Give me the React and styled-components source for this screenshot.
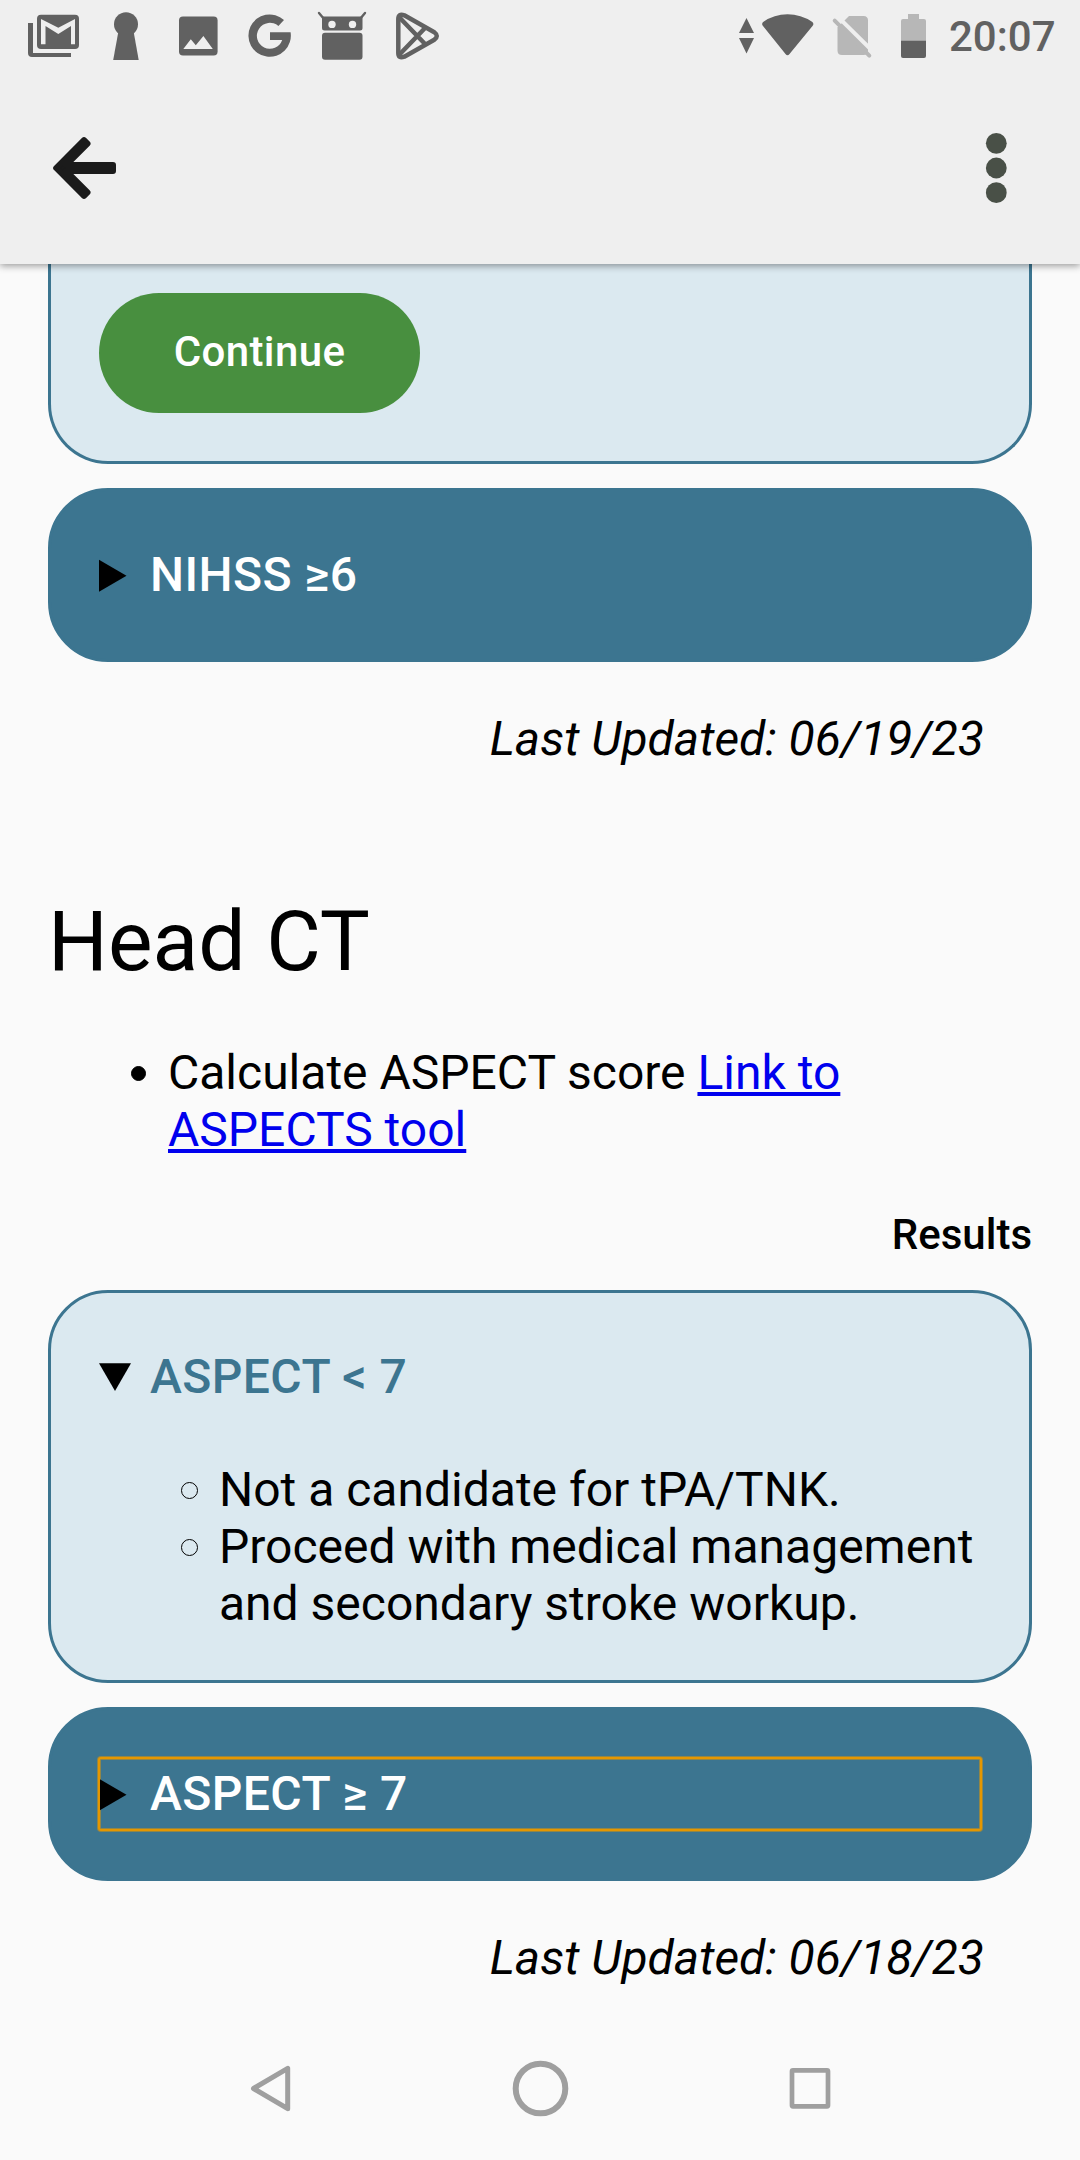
import React from "react";
import styled, { createGlobalStyle } from "styled-components";

const ink = "#616161";
const faint = "#b7b7b7";
const chrome = "#efefef";
const blue = "#3c7590";

const GlobalStyle = createGlobalStyle`
  * { box-sizing: border-box; }
  body {
    margin: 0;
    background: #fafafa;
    color: #000;
    font-family: Roboto, "Liberation Sans", sans-serif;
    font-size: 48px;
    line-height: 57px;
  }
`;

const Screen = styled.div`
  width: 1080px;
  height: 2160px;
  display: flex;
  flex-direction: column;
  overflow: hidden;
`;

const Header = styled.header`
  flex: none;
  position: relative;
  z-index: 1;
  background: ${chrome};
  box-shadow: 0 2px 7px rgba(0, 0, 0, 0.38);
`;

const StatusBar = styled.div`
  height: 72px;
  display: flex;
  justify-content: space-between;
`;

const StatusGroup = styled.div`
  display: flex;
  align-items: center;
`;

const Clock = styled.span`
  width: 131px;
  padding-top: 2px;
  font-size: 42px;
  font-weight: 500;
  line-height: 72px;
  color: ${ink};
`;

const AppBar = styled.div`
  height: 192px;
  padding: 0 51px;
  display: flex;
  align-items: center;
  justify-content: space-between;
`;

const IconButton = styled.button`
  padding: 0;
  border: 0;
  background: none;
  display: flex;
`;

const Content = styled.main`
  flex: 1;
  min-height: 0;
  padding: 0 48px;
`;

const Panel = styled.section`
  padding: 48px;
  border: 3px solid ${blue};
  border-radius: 60px;
  background: ${(p) => (p.$open ? "#dbe9f0" : blue)};
  & + & { margin-top: 24px; }
`;

const ScrolledPanel = styled(Panel)`
  padding-top: 29px;
  border-top: 0;
  border-top-left-radius: 0;
  border-top-right-radius: 0;
`;

const ContinueButton = styled.button`
  width: 321px;
  height: 120px;
  display: block;
  padding: 0 0 4px;
  border: 0;
  border-radius: 60px;
  background: #488f3f;
  color: #fff;
  font: 500 42px Roboto, "Liberation Sans", sans-serif;
  letter-spacing: 0.0089em;
`;

const Summary = styled.div`
  height: 72px;
  display: flex;
  align-items: center;
  font-weight: 500;
  line-height: 72px;
  letter-spacing: 0.0089em;
  color: ${(p) => (p.$open ? blue : "#fff")};
  border-radius: 2px;
  outline: ${(p) => (p.$focused ? "2px solid #e59700" : "none")};
  outline-offset: -1px;
  box-shadow: ${(p) =>
    p.$focused
      ? "0 0 0 2px rgba(229, 151, 0, 0.5), inset 0 0 0 2px rgba(229, 151, 0, 0.5)"
      : "none"};
`;

const Marker = styled.svg`
  flex: none;
  width: 51px;
  height: 72px;
`;

const Updated = styled.p`
  margin: 48px 48px 0;
  text-align: right;
  font-style: italic;
`;

const Title = styled.h1`
  margin: 126px 0 53px;
  font-size: 84px;
  font-weight: 400;
  line-height: 98px;
`;

const List = styled.ul`
  margin: ${(p) => (p.$nested ? "48px 0 0" : "0")};
  padding: 0 0 0 82px;
  list-style: none;
`;

const Item = styled.li`
  display: flex;
`;

const Bullet = styled.span`
  flex: none;
  width: ${(p) => (p.$hollow ? 17 : 15)}px;
  height: ${(p) => (p.$hollow ? 17 : 15)}px;
  margin: ${(p) => (p.$hollow ? "21px 21px 0 0" : "22px 22px 0 1px")};
  border: 1px solid #000;
  border-radius: 50%;
  background: ${(p) => (p.$hollow ? "transparent" : "#000")};
`;

const Link = styled.a`
  color: #0000ee;
  text-decoration: underline;
  text-decoration-thickness: 4px;
  text-underline-offset: 3px;
`;

const Results = styled.h2`
  margin: 52px 0 31px;
  text-align: right;
  font-size: 42px;
  font-weight: 500;
  line-height: 49px;
`;

const NavBar = styled.nav`
  flex: none;
  height: 144px;
  padding: 0 135px;
  display: grid;
  grid-template-columns: repeat(3, 1fr);
  place-items: center;
`;

function NotificationIcons() {
  return (
    <svg width="460" height="72" viewBox="0 0 460 72" fill={ink}>
      <path d="M28 23h5v30h38v4H32q-4 0-4-4z" />
      <rect x="37" y="14.7" width="42" height="34.3" rx="4" />
      <path fill={chrome} d="M41 19l17.3 8.8L75 19v25.3h-4V26l-12.7 8-12.8-8v18.3H41z" />
      <circle cx="126" cy="24.2" r="12" />
      <path d="M118.5 31h15l5.2 29h-25.5z" />
      <rect x="179" y="16.5" width="38.6" height="39" rx="4" />
      <path fill={chrome} d="M183.3 49l7.5-9.7 5 5.9 7.6-9.2 9.4 13z" />
      <path d="M284 20A21.2 21.2 0 1 0 290.6 32.3H270V40h12.2A13 13 0 1 1 278.4 26z" />
      <path stroke={ink} strokeWidth="2.4" strokeLinecap="round" d="M319 13l5 6M365 13l-5 6" />
      <path d="M322 16.5h40.5V28q0 2.5-2.5 2.5h-35.5q-2.5 0-2.5-2.5z" />
      <rect x="322" y="32.8" width="40.5" height="27" rx="3" />
      <circle cx="332" cy="24.4" r="3.7" fill={chrome} />
      <circle cx="352.5" cy="24.4" r="3.7" fill={chrome} />
      <g fill="none" stroke={ink} strokeWidth="4.5" strokeLinejoin="round">
        <path d="M398.3 19v34q0 6 6 3.7l30-17q5-3.700 0-7.400l-30-17q-6-2.300-6 3.700z" />
        <path d="M399 17l27 28M399 55l27-28" />
      </g>
    </svg>
  );
}

function SystemIcons() {
  return (
    <svg width="211" height="72" viewBox="738 0 211 72" fill={ink}>
      <path d="M746.5 18l7.500 15h-15zM739 38h15l-7.500 15.500z" />
      <path d="M763 26q-2-2.500.5-4.200Q774 14.200 787.500 14.200T812 21.800q2.500 1.700.5 4.200L789.500 54q-2 2.500-4 0z" />
      <path fill={faint} d="M849 16h14.500q4.500 0 4.500 4.500v30q0 4.500-4.500 4.500H842q-4.500 0-4.500-4.500V27.500z" />
      <path stroke={chrome} strokeWidth="4" d="M838 16.800L873 51.500" />
      <path stroke={faint} strokeWidth="4" strokeLinecap="round" d="M834.700 20.700L869.300 55.700" />
      <path fill={faint} d="M908 14h11v5h5q2 0 2 2v20h-25V21q0-2 2-2h5z" />
      <path d="M901 40.700h25V56q0 2-2 2h-21q-2 0-2-2z" />
    </svg>
  );
}

function Disclosure({ open }) {
  return (
    <Marker viewBox="0 0 51 72">
      <path d={open ? "M0 22.300h32L16 50z" : "M0 20.700v32l27.500-16z"} fill="#000" />
    </Marker>
  );
}

function Section({ title, open, focused, children }) {
  return (
    <Panel $open={open}>
      <Summary $open={open} $focused={focused}>
        <Disclosure open={open} />
        {title}
      </Summary>
      {children}
    </Panel>
  );
}

export default function App() {
  return (
    <Screen>
      <GlobalStyle />
      <Header>
        <StatusBar>
          <NotificationIcons />
          <StatusGroup>
            <SystemIcons />
            <Clock>20:07</Clock>
          </StatusGroup>
        </StatusBar>
        <AppBar>
          <IconButton aria-label="Back">
            <svg width="68" height="66" viewBox="51 135 68 66">
              <path
                d="M56.200 168L84 140.200l3.500 3.500L66 165h47v6H66l21.500 21.300-3.500 3.500z"
                fill="#1b1b1b"
                stroke="#1b1b1b"
                strokeWidth="6"
                strokeLinejoin="round"
              />
            </svg>
          </IconButton>
          <IconButton aria-label="More options">
            <svg width="66" height="72" viewBox="963 132 66 72" fill="#495047">
              <circle cx="996.3" cy="143.3" r="10.4" />
              <circle cx="996.3" cy="168" r="10.4" />
              <circle cx="996.3" cy="192.7" r="10.4" />
            </svg>
          </IconButton>
        </AppBar>
      </Header>
      <Content>
        <ScrolledPanel $open>
          <ContinueButton>Continue</ContinueButton>
        </ScrolledPanel>
        <Section title="NIHSS ≥6" />
        <Updated>Last Updated: 06/19/23</Updated>
        <Title>Head CT</Title>
        <List>
          <Item>
            <Bullet />
            <span>
              Calculate ASPECT score <Link href="#">Link to<br />ASPECTS tool</Link>
            </span>
          </Item>
        </List>
        <Results>Results</Results>
        <Section title="ASPECT < 7" open>
          <List $nested>
            <Item>
              <Bullet $hollow />
              <span>Not a candidate for tPA/TNK.</span>
            </Item>
            <Item>
              <Bullet $hollow />
              <span>Proceed with medical management and secondary stroke workup.</span>
            </Item>
          </List>
        </Section>
        <Section title="ASPECT ≥ 7" focused />
        <Updated>Last Updated: 06/18/23</Updated>
      </Content>
      <NavBar>
        <svg width="60" height="60" viewBox="240 2058 60 60" fill="none" stroke="#9f9f9f" strokeWidth="5" strokeLinejoin="round">
          <path d="M253.5 2088.500L287.700 2068.300V2108.700z" />
        </svg>
        <svg width="60" height="60" viewBox="0 0 60 60" fill="none" stroke="#9f9f9f">
          <circle cx="30.5" cy="30.5" r="24.8" strokeWidth="6" />
        </svg>
        <svg width="60" height="60" viewBox="0 0 60 60" fill="none" stroke="#9f9f9f">
          <rect x="12" y="12.3" width="36" height="36" rx="1" strokeWidth="4.7" />
        </svg>
      </NavBar>
    </Screen>
  );
}
